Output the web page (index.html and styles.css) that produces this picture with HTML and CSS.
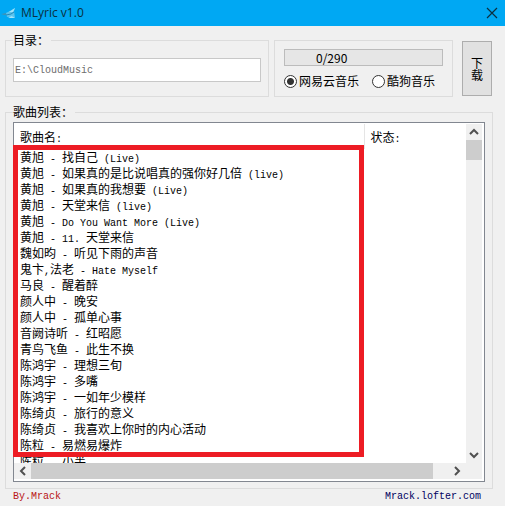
FILE: index.html
```html
<!DOCTYPE html>
<html lang="zh-CN">
  <head>
    <meta charset="UTF-8" />
    <meta name="viewport" content="width=device-width, initial-scale=1.0" />
    <title>MLyric v1.0</title>
    <link rel="stylesheet" href="styles.css">
  </head>
  <body>
    <header class="titlebar">
      <svg class="app-icon" width="16" height="16" viewBox="0 0 16 16">
        <path d="M0 9 L5 8 L6 10 L3 10 Z" fill="#3d93b8" />
        <path d="M5 8 L9 6 L14 3 L13 6 L14 13 L11 11 L6 12 Z" fill="#5cc4ee" />
        <path d="M8 7 L14 3 L12 7 Z M7 12 L11 11 L14 13 L9 13 Z" fill="#a6e4fa" />
        <path d="M5 10 L10 9 L13 7" fill="none" stroke="#2489b8" />
      </svg>
      <h1 class="title">MLyric v1.0</h1>
      <button class="close" type="button" aria-label="关闭">
        <svg width="12" height="12" viewBox="0 0 12 12">
          <path d="M1 1 L11 11 M11 1 L1 11" stroke="#0b3040" stroke-width="1.2" />
        </svg>
      </button>
    </header>

    <main class="window">
      <div class="toolbar">
        <fieldset class="group folder">
          <legend><label for="path">目录：</label></legend>
          <input class="path mono" id="path" type="text" value="E:\CloudMusic" />
        </fieldset>
        <div class="panel">
          <div class="progress">
            <progress id="progress" value="0" max="290" aria-label="进度"></progress>
            <span>0/290</span>
          </div>
          <div class="sources">
            <label><input type="radio" name="source" checked />网易云音乐</label>
            <label><input type="radio" name="source" />酷狗音乐</label>
          </div>
        </div>
        <button class="download" type="button">下载</button>
      </div>

      <fieldset class="group songs">
        <legend>歌曲列表：</legend>
        <div class="list">
          <div class="view">
            <table>
              <thead>
                <tr><th class="name">歌曲名<span class="mono">:</span></th><th>状态<span class="mono">:</span></th></tr>
              </thead>
              <tbody>
                <tr><td>黄旭<span class="mono"> - </span>找自己<span class="mono"> (Live)</span></td><td></td></tr>
                <tr><td>黄旭<span class="mono"> - </span>如果真的是比说唱真的强你好几倍<span class="mono"> (live)</span></td><td></td></tr>
                <tr><td>黄旭<span class="mono"> - </span>如果真的我想要<span class="mono"> (Live)</span></td><td></td></tr>
                <tr><td>黄旭<span class="mono"> - </span>天堂来信<span class="mono"> (live)</span></td><td></td></tr>
                <tr><td>黄旭<span class="mono"> - Do You Want More (Live)</span></td><td></td></tr>
                <tr><td>黄旭<span class="mono"> - 11. </span>天堂来信</td><td></td></tr>
                <tr><td>魏如昀<span class="mono"> - </span>听见下雨的声音</td><td></td></tr>
                <tr><td>鬼卞<span class="mono">,</span>法老<span class="mono"> - Hate Myself</span></td><td></td></tr>
                <tr><td>马良<span class="mono"> - </span>醒着醉</td><td></td></tr>
                <tr><td>颜人中<span class="mono"> - </span>晚安</td><td></td></tr>
                <tr><td>颜人中<span class="mono"> - </span>孤单心事</td><td></td></tr>
                <tr><td>音阙诗听<span class="mono"> - </span>红昭愿</td><td></td></tr>
                <tr><td>青鸟飞鱼<span class="mono"> - </span>此生不换</td><td></td></tr>
                <tr><td>陈鸿宇<span class="mono"> - </span>理想三旬</td><td></td></tr>
                <tr><td>陈鸿宇<span class="mono"> - </span>多嘴</td><td></td></tr>
                <tr><td>陈鸿宇<span class="mono"> - </span>一如年少模样</td><td></td></tr>
                <tr><td>陈绮贞<span class="mono"> - </span>旅行的意义</td><td></td></tr>
                <tr><td>陈绮贞<span class="mono"> - </span>我喜欢上你时的内心活动</td><td></td></tr>
                <tr><td>陈粒<span class="mono"> - </span>易燃易爆炸</td><td></td></tr>
                <tr><td>陈粒<span class="mono"> - </span>小半</td><td></td></tr>
              </tbody>
            </table>
          </div>
          <div class="vscroll">
            <svg width="16" height="16" viewBox="0 0 16 16"><path d="M4 10 L8 6 L12 10" /></svg>
            <div class="vthumb"></div>
            <svg width="16" height="16" viewBox="0 0 16 16"><path d="M4 6 L8 10 L12 6" /></svg>
          </div>
          <div class="hscroll">
            <svg width="16" height="16" viewBox="0 0 16 16"><path d="M10 4 L6 8 L10 12" /></svg>
            <div class="hthumb"></div>
            <svg width="16" height="16" viewBox="0 0 16 16"><path d="M6 4 L10 8 L6 12" /></svg>
          </div>
          <!-- red frame marking the visible songs -->
          <div class="marker"></div>
        </div>
      </fieldset>

      <footer class="footer">
        <span class="author mono">By.Mrack</span>
        <a class="mono" href="http://mrack.lofter.com">Mrack.lofter.com</a>
      </footer>
    </main>
  </body>
</html>
```
FILE: styles.css
```css
* {
  box-sizing: border-box;
}
body {
  margin: 0;
  background: #f0f0f0;
  color: #000;
  font-family: "Noto Sans CJK SC", sans-serif;
  font-size: 12px;
  line-height: 16px;
}
button,
input {
  font-family: inherit;
  font-size: 12px;
}
.mono {
  font-family: "Liberation Mono", monospace;
  font-size: 10px;
  line-height: 10px;
  white-space: pre;
}

.titlebar {
  display: flex;
  align-items: center;
  height: 26px;
  padding: 0 6px 0 1px;
  background: #00a8f3;
}
.title {
  flex: 1;
  margin: 0 0 0 4px;
  color: #0b3040;
  font-family: "Open Sans", sans-serif;
  font-size: 12px;
  font-weight: 400;
}
.close {
  display: flex;
  padding: 1px;
  border: none;
  background: none;
}

.window {
  padding: 6px 12px 0 5px;
}
.toolbar {
  display: flex;
  align-items: flex-end;
  padding-right: 1px;
}
.group {
  min-width: 0;
  margin: 0;
  padding: 0 7px;
  border: 1px solid #dcdcdc;
}
.group legend {
  height: 16px;
  padding: 0 2px 0 0;
}
.folder {
  flex: 1;
  height: 65px;
}
.path {
  display: block;
  width: 100%;
  height: 24px;
  margin-top: 10px;
  padding: 0 1px;
  border: 1px solid #c8c8c8;
  background: #fff;
  color: #6d6d6d;
}
.panel {
  width: 179px;
  height: 57px;
  margin-left: 5px;
  padding: 8px 9px 0;
  border: 1px solid #dcdcdc;
}
.progress {
  display: grid;
  align-items: center;
}
.progress > * {
  grid-area: 1 / 1;
}
.progress span {
  padding-left: 32px;
}
progress {
  appearance: none;
  width: 100%;
  height: 17px;
  border: 1px solid #bcbcbc;
}
progress::-webkit-progress-bar {
  background: #e6e6e6;
}
.sources {
  display: flex;
  gap: 13px;
  margin-top: 7px;
}
.sources label {
  display: flex;
  align-items: center;
  gap: 2px;
  white-space: nowrap;
}
.sources input {
  appearance: none;
  width: 13px;
  height: 13px;
  margin: 0;
  border: 1px solid #333;
  border-radius: 50%;
  background: #fff;
}
.sources input:checked {
  background: radial-gradient(circle, #333 3px, #fff 4px);
}
.download {
  width: 30px;
  height: 55px;
  margin: 0 0 1px 9px;
  padding: 0 8px;
  border: 1px solid #adadad;
  background: #e1e1e1;
  color: #000;
  line-height: 12px;
}

.songs {
  margin-top: 7px;
  padding-bottom: 6px;
}
.list {
  position: relative;
  display: grid;
  grid-template-columns: 1fr 16px;
  margin-top: 2px;
  padding: 1px 2px 2px 0;
  border: 1px solid #828790;
  background: #fff;
}
.view {
  height: 339px;
  overflow: hidden;
}
table {
  width: 100%;
  table-layout: fixed;
  border-collapse: collapse;
}
th,
td {
  height: 16px;
  padding: 0 6px;
  font-weight: 400;
  text-align: left;
  white-space: nowrap;
}
th {
  height: 25px;
}
th.name {
  width: 350px;
  border-right: 1px solid #e5e5e5;
}
.vscroll,
.hscroll {
  display: flex;
  background: #f0f0f0;
}
.vscroll {
  flex-direction: column;
}
.hscroll {
  grid-column: 1 / 3;
  padding: 0 17px 0 1px;
}
.vscroll path,
.hscroll path {
  fill: none;
  stroke: #505050;
  stroke-width: 2;
}
.vthumb {
  height: 20px;
  margin-bottom: auto;
  background: #cdcdcd;
}
.hthumb {
  flex: 1;
  margin-right: 16px;
  background: #cdcdcd;
}
.marker {
  position: absolute;
  top: 22px;
  left: -1px;
  width: 351px;
  height: 312px;
  border: 5px solid #ed1c24;
}

.footer {
  display: flex;
  justify-content: space-between;
  padding: 3px 12px 0 8px;
}
.author {
  color: #b81414;
}
.footer a {
  color: #000060;
  text-decoration: none;
}
```
